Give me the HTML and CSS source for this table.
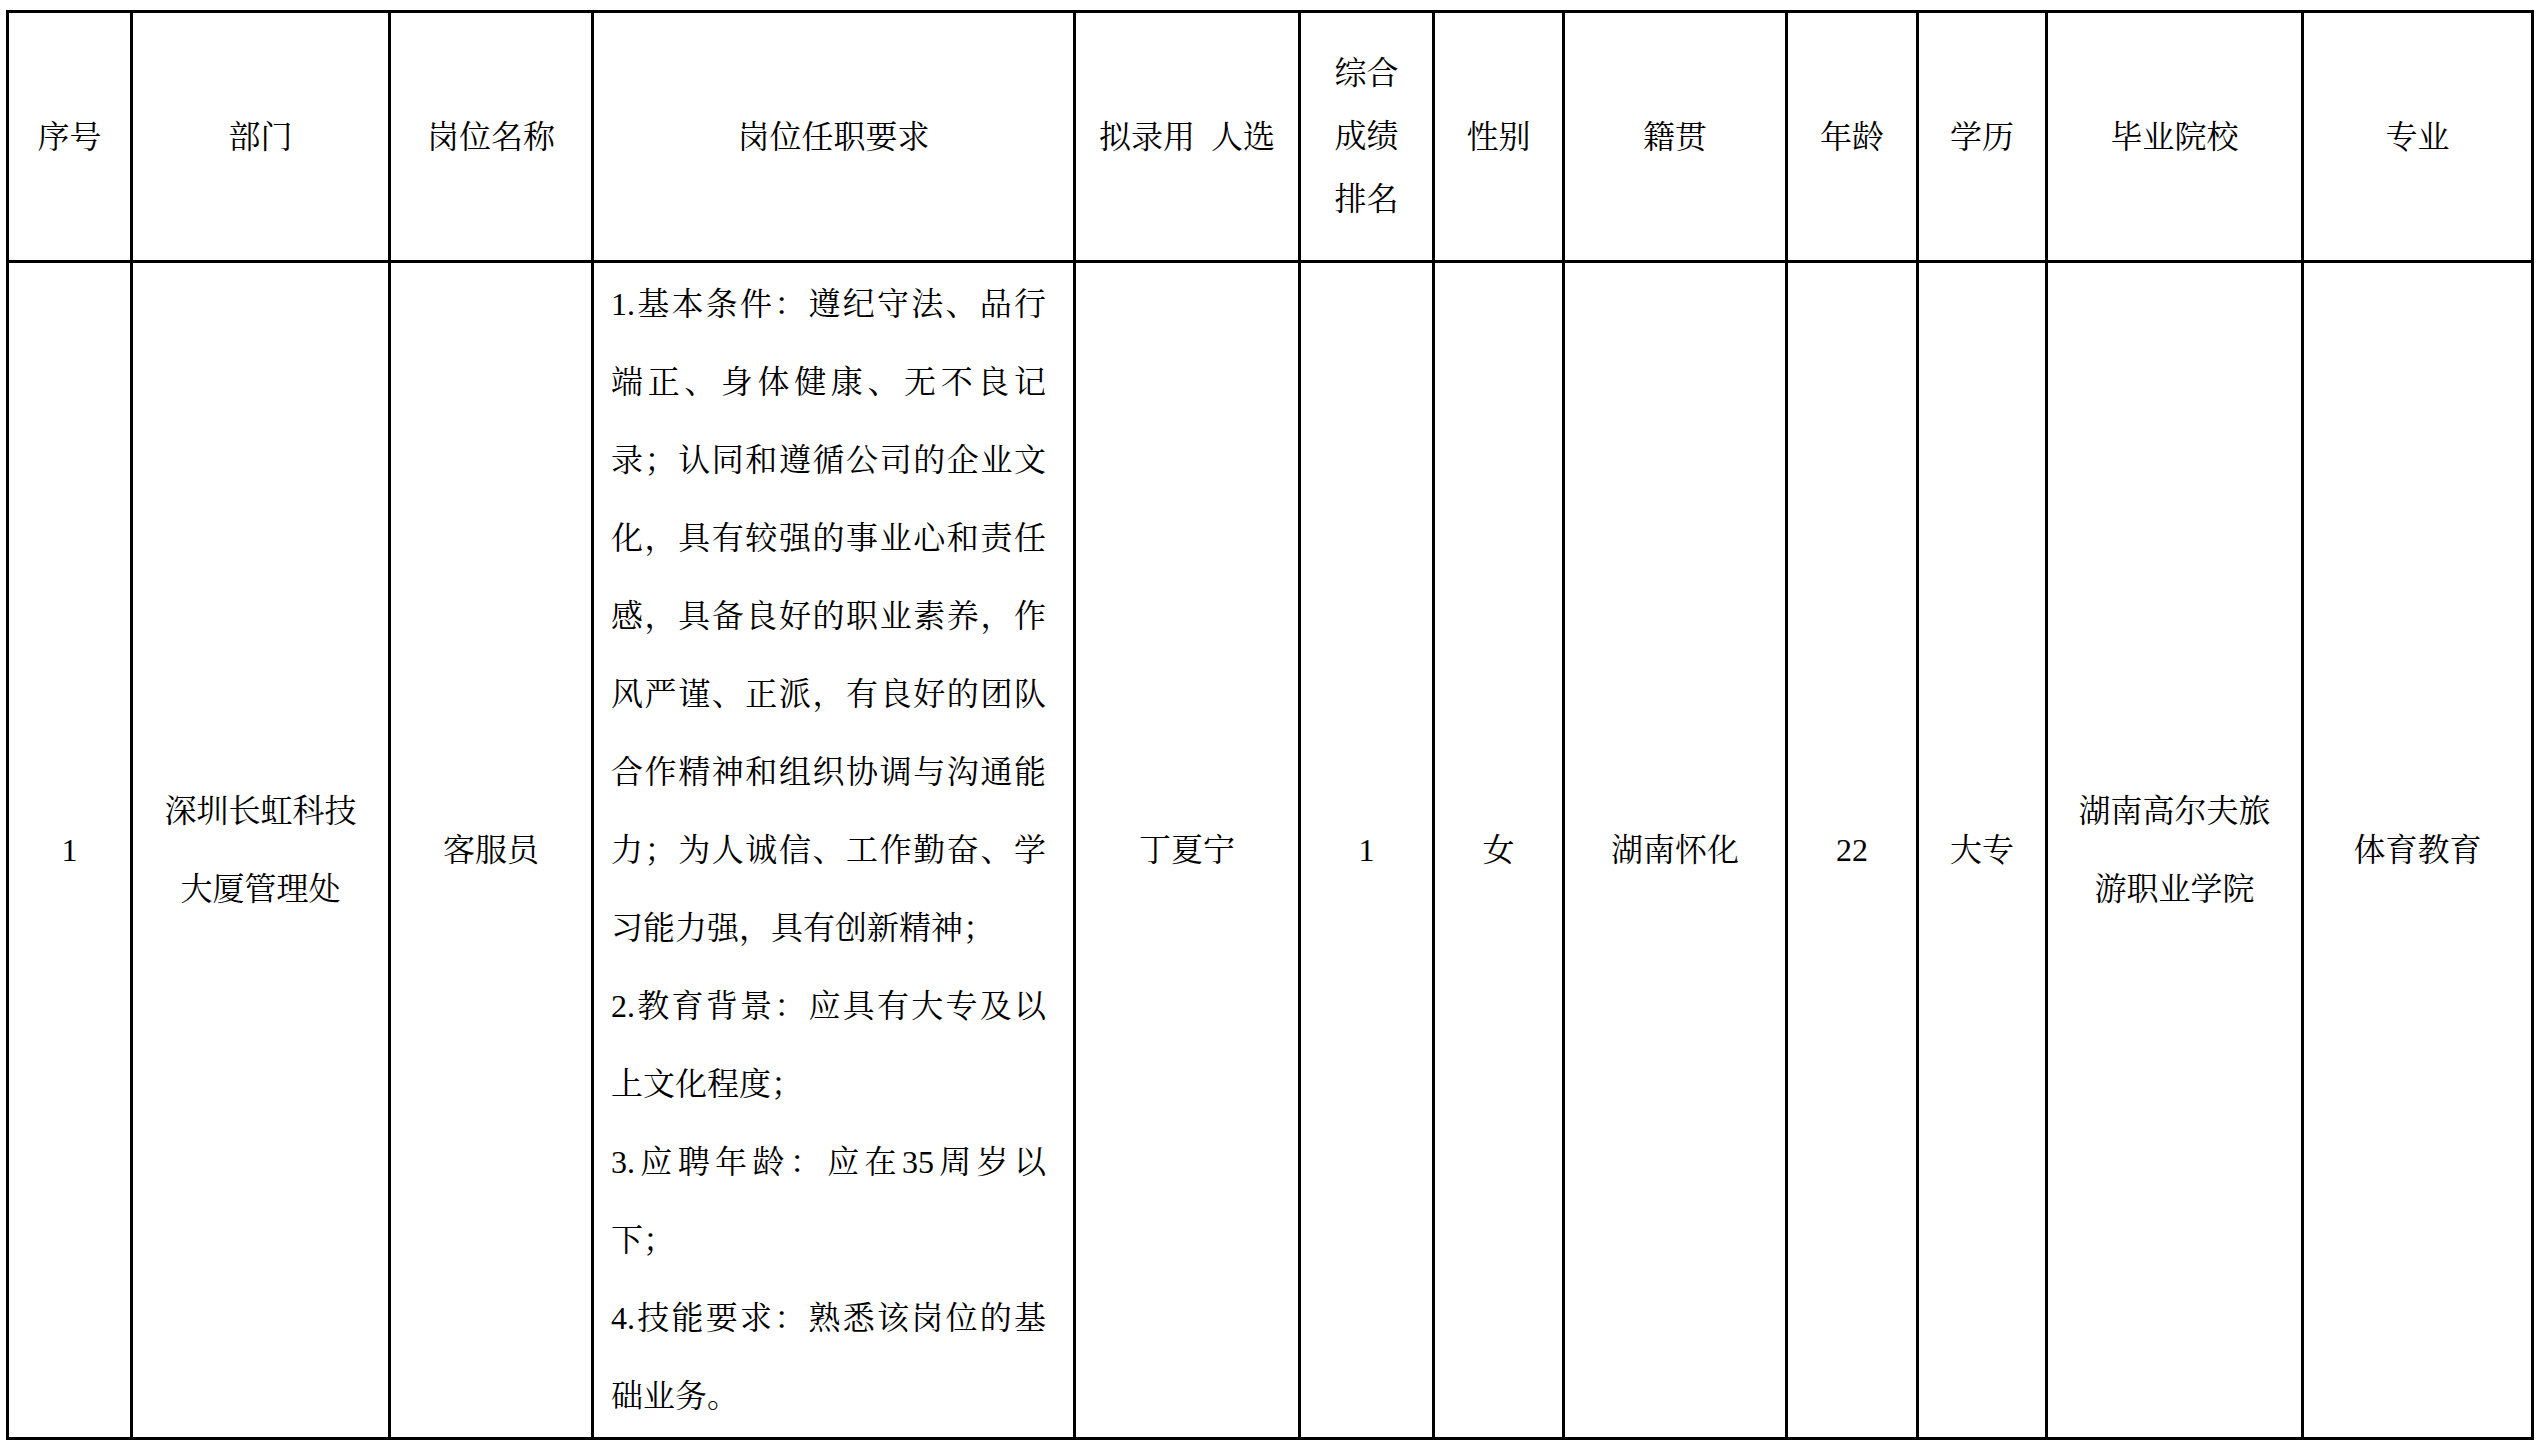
FILE: index.html
```html
<!DOCTYPE html>
<html lang="zh-CN">
<head>
<meta charset="utf-8">
<title>拟录用人选公示</title>
<link rel="stylesheet" href="styles.css">
</head>
<body>
<div class="sheet">
  <div class="cell head">序号</div>
  <div class="cell head">部门</div>
  <div class="cell head">岗位名称</div>
  <div class="cell head">岗位任职要求</div>
  <div class="cell head">拟录用&ensp;人选</div>
  <div class="cell head stack">综合<br>成绩<br>排名</div>
  <div class="cell head">性别</div>
  <div class="cell head">籍贯</div>
  <div class="cell head">年龄</div>
  <div class="cell head">学历</div>
  <div class="cell head">毕业院校</div>
  <div class="cell head">专业</div>

  <div class="cell body">1</div>
  <div class="cell body">深圳长虹科技<br>大厦管理处</div>
  <div class="cell body">客服员</div>
  <div class="cell req">
    <div class="lines">
      <div class="ln">1.基本条件：遵纪守法、品行</div>
      <div class="ln">端正、身体健康、无不良记</div>
      <div class="ln">录；认同和遵循公司的企业文</div>
      <div class="ln">化，具有较强的事业心和责任</div>
      <div class="ln">感，具备良好的职业素养，作</div>
      <div class="ln">风严谨、正派，有良好的团队</div>
      <div class="ln">合作精神和组织协调与沟通能</div>
      <div class="ln">力；为人诚信、工作勤奋、学</div>
      <div class="ln end">习能力强，具有创新精神；</div>
      <div class="ln">2.教育背景：应具有大专及以</div>
      <div class="ln end">上文化程度；</div>
      <div class="ln">3.应聘年龄：应在35周岁以</div>
      <div class="ln end">下；</div>
      <div class="ln">4.技能要求：熟悉该岗位的基</div>
      <div class="ln end">础业务。</div>
    </div>
  </div>
  <div class="cell body">丁夏宁</div>
  <div class="cell body">1</div>
  <div class="cell body">女</div>
  <div class="cell body">湖南怀化</div>
  <div class="cell body">22</div>
  <div class="cell body">大专</div>
  <div class="cell body">湖南高尔夫旅<br>游职业学院</div>
  <div class="cell body">体育教育</div>
</div>
</body>
</html>
```
FILE: styles.css
```css
html, body {
  margin: 0;
  padding: 0;
  background: #ffffff;
}

body {
  font-family: "Liberation Serif", "Noto Serif CJK SC", "Noto Sans CJK SC", serif;
  font-size: 32px;
  color: #000000;
}

.sheet {
  display: grid;
  grid-template-columns: 121px 255px 200px 479px 222px 131px 127px 220px 128px 126px 253px 227px;
  grid-template-rows: 247px 1174px;
  gap: 3px;
  background: #000000;
  border: 3px solid #000000;
  margin: 10px 0 0 6px;
  width: max-content;
}

.cell {
  background: #ffffff;
  display: flex;
  align-items: center;
  justify-content: center;
  text-align: center;
}

.head {
  line-height: 40px;
}

.head.stack {
  line-height: 63px;
}

.body {
  line-height: 78px;
}

.req {
  justify-content: flex-start;
  padding: 0 27px 0 17px;
}

.lines {
  width: 100%;
  line-height: 78px;
}

.ln {
  text-align: justify;
  text-align-last: justify;
}

.ln.end {
  text-align: left;
  text-align-last: left;
}
```
